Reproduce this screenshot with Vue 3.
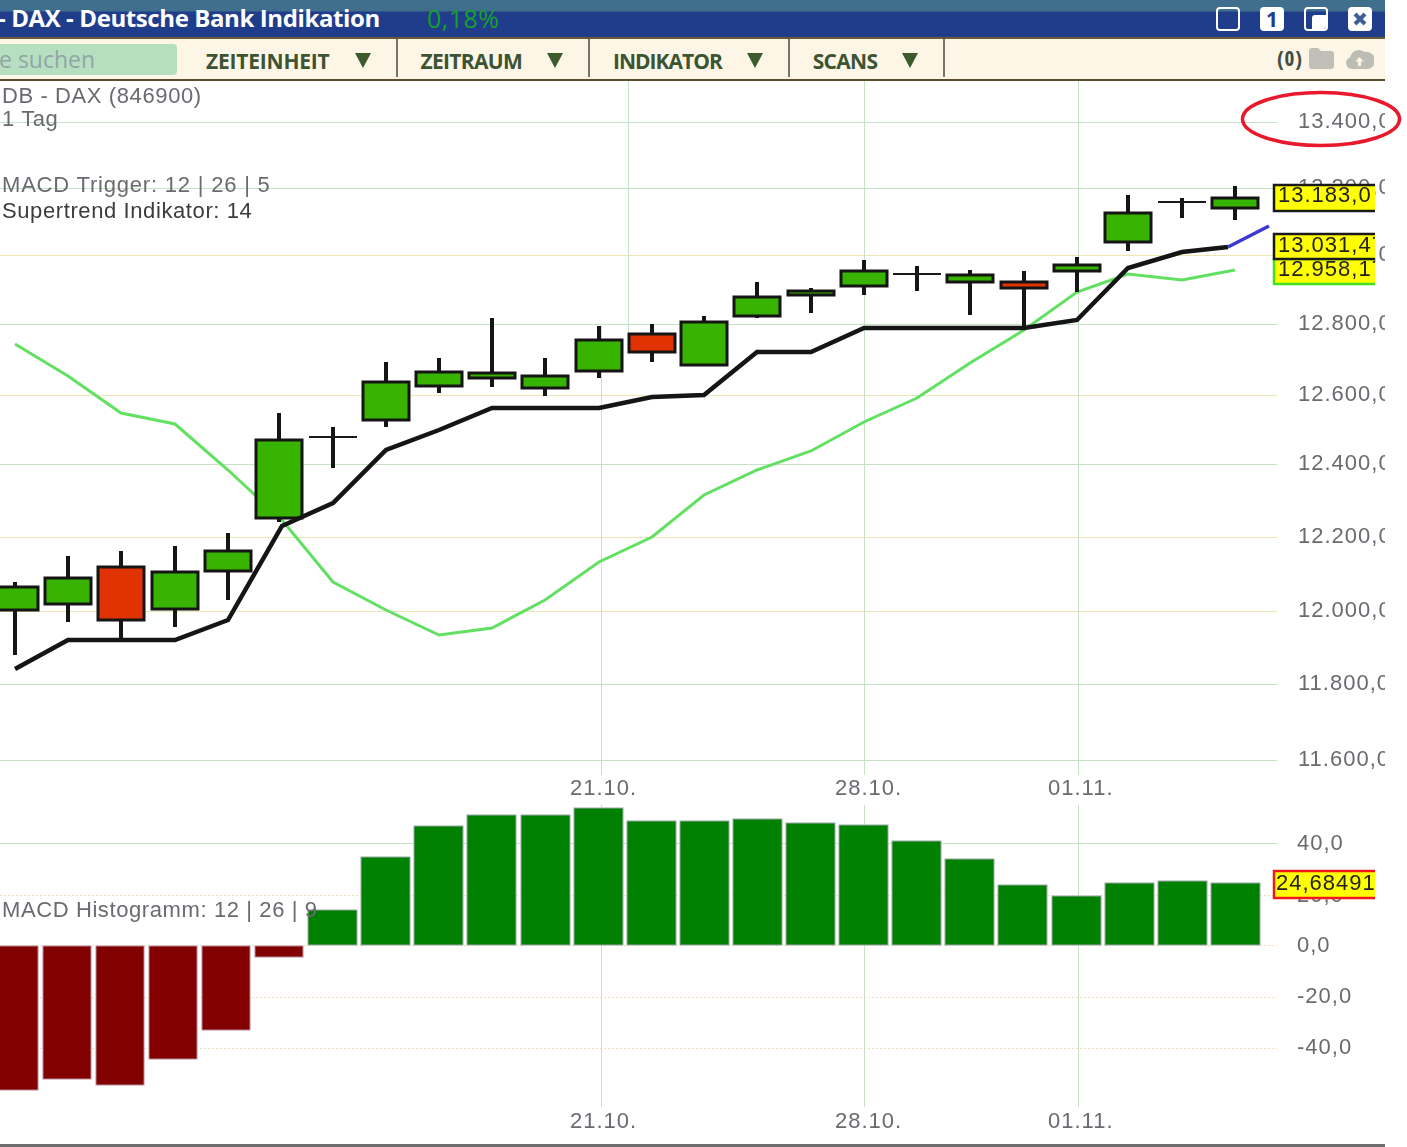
<script setup>
const menus = [
  { label: 'ZEITEINHEIT', tracking: -0.2 },
  { label: 'ZEITRAUM', tracking: -0.7 },
  { label: 'INDIKATOR', tracking: -1 },
  { label: 'SCANS', tracking: -0.7 }
]

const candles = [
  [15, 587, 610, 582, 655, 'g'], [68, 578, 604, 556, 622, 'g'], [121, 567, 620, 551, 640, 'r'],
  [175, 572, 609, 546, 627, 'g'], [228, 551, 571, 533, 600, 'g'], [279, 440, 518, 413, 522, 'g'],
  [333, 437, 437, 427, 468, 'd'], [386, 382, 420, 362, 427, 'g'], [439, 372, 386, 358, 393, 'g'],
  [492, 373, 378, 318, 387, 'g'], [545, 376, 388, 358, 396, 'g'], [599, 340, 371, 326, 378, 'g'],
  [652, 334, 352, 324, 362, 'r'], [704, 322, 365, 316, 366, 'g'], [757, 297, 316, 282, 318, 'g'],
  [811, 291, 295, 288, 313, 'g'], [864, 271, 286, 260, 295, 'g'], [917, 274, 274, 266, 291, 'd'],
  [970, 275, 282, 270, 315, 'g'], [1024, 282, 288, 271, 328, 'r'], [1077, 265, 271, 257, 292, 'g'],
  [1128, 213, 242, 195, 251, 'g'], [1182, 202, 202, 198, 218, 'd'], [1235, 198, 208, 186, 220, 'g']
].map(([x, top, bot, wt, wb, k]) => ({ x, top, bot, wt, wb, k }))

const trend = '15,669 68,640 175,640 228,620 282,526 333,503 386,450 439,430 492,408 599,408 652,397 704,395 757,352 811,352 864,328 1024,328 1077,320 1128,268 1182,252 1228,247'
const signal = '15,344 68,376 121,413 175,424 228,470 282,520 333,582 386,610 439,635 492,628 545,600 599,562 652,537 704,495 757,470 811,451 864,422 917,398 970,363 1024,330 1077,292 1128,274 1182,280 1235,270'

const redBars = [[-10, 1090], [43, 1079], [96, 1085], [149, 1059], [202, 1030], [255, 957]]
const greenBars = [[308, 910], [361, 857], [414, 826], [467, 815], [521, 815], [574, 808], [627, 821], [680, 821], [733, 819], [786, 823], [839, 825], [892, 841], [945, 859], [998, 885], [1052, 896], [1105, 883], [1158, 881], [1211, 883]]

const priceGrid = [
  { y: 122, c: 'green' }, { y: 188, c: 'green' }, { y: 255, c: 'yellow' }, { y: 324, c: 'green' },
  { y: 395, c: 'yellow' }, { y: 464, c: 'green' }, { y: 537, c: 'yellow' }, { y: 611, c: 'yellow' },
  { y: 684, c: 'green' }, { y: 760, c: 'green' }
]
const macdGrid = [
  { y: 843, c: 'green' }, { y: 895, c: 'dots' }, { y: 945, c: 'dots' }, { y: 997, c: 'dots' }, { y: 1048, c: 'dots' }
]
const priceLabels = [
  ['13.400,0', 128], ['13.200,0', 194], ['13.000,0', 261], ['12.800,0', 330], ['12.600,0', 401],
  ['12.400,0', 470], ['12.200,0', 543], ['12.000,0', 617], ['11.800,0', 690], ['11.600,0', 766]
]
const macdLabels = [['40,0', 850], ['20,0', 902], ['0,0', 952], ['-20,0', 1003], ['-40,0', 1054]]
const dates = [['21.10.', 570], ['28.10.', 835], ['01.11.', 1048]]
const verticals = [864, 1078]
</script>

<template>
  <div class="page">
    <header class="titlebar">
      <div class="title">- DAX - Deutsche Bank Indikation</div>
      <div class="change">0,18%</div>
      <div class="winbtns">
        <span class="winbtn"></span>
        <span class="winbtn solid">1</span>
        <span class="winbtn restore"><i></i></span>
        <span class="winbtn solid close">
          <svg viewBox="0 0 24 24" width="24" height="24"><path d="M7 7 17 17M17 7 7 17" /></svg>
        </span>
      </div>
    </header>

    <nav class="toolbar">
      <div class="search">e suchen</div>
      <div v-for="m in menus" :key="m.label" class="menu">
        <span class="menu-label" :style="{ letterSpacing: m.tracking + 'px' }">{{ m.label }}</span>
        <span class="arrow"></span>
      </div>
      <div class="tools">
        <span class="count">(0)</span>
        <svg class="folder" viewBox="0 0 26 22" width="26" height="22">
          <path d="M1 4q0-3 3-3h6l3 3h10q3 0 3 3v12q0 3-3 3H4q-3 0-3-3z" />
        </svg>
        <svg class="cloud" viewBox="0 0 29 23" width="29" height="23">
          <path d="M7 22a6 6 0 0 1-2-11.600A9.500 9.500 0 0 1 20 5a7 7 0 0 1 3 17z" />
          <path class="cloud-arrow" d="M14.500 10l-4 4.500h2.500V19h3v-4.500h2.500z" />
        </svg>
      </div>
    </nav>

    <svg class="chart" viewBox="0 81 1407 1063" width="1407" height="1063">
      <defs>
        <clipPath id="panel"><rect x="0" y="81" width="1385" height="1063" /></clipPath>
        <clipPath id="tagclip"><rect x="1272" y="170" width="103" height="740" /></clipPath>
      </defs>

      <g clip-path="url(#panel)">
        <line v-for="g in priceGrid" :key="g.y" class="grid" :class="g.c" x1="0" x2="1277" :y1="g.y" :y2="g.y" />
        <line v-for="g in macdGrid" :key="g.y" class="grid" :class="g.c" x1="0" x2="1277" :y1="g.y" :y2="g.y" />

        <line class="grid green" x1="628" x2="628" y1="81" y2="332" />
        <line class="grid green" x1="601" x2="601" y1="326" y2="775" />
        <line class="grid green" x1="601" x2="601" y1="805" y2="1107" />
        <template v-for="v in verticals" :key="v">
          <line class="grid green" :x1="v" :x2="v" y1="81" y2="775" />
          <line class="grid green" :x1="v" :x2="v" y1="805" y2="1107" />
        </template>

        <g class="labels">
          <text x="2" y="103">DB - DAX (846900)</text>
          <text x="2" y="126">1 Tag</text>
          <text class="trigger" x="2" y="192">MACD Trigger: 12 | 26 | 5</text>
          <text class="dark" x="2" y="218">Supertrend Indikator: 14</text>
          <text v-for="p in priceLabels" :key="p[0]" class="axis" x="1298" :y="p[1]">{{ p[0] }}</text>
          <text v-for="p in macdLabels" :key="p[0]" class="axis" x="1297" :y="p[1]">{{ p[0] }}</text>
          <template v-for="d in dates" :key="d[0]">
            <text class="date" :x="d[1]" y="795">{{ d[0] }}</text>
            <text class="date" :x="d[1]" y="1128">{{ d[0] }}</text>
          </template>
        </g>

        <polyline class="signal" :points="signal" />

        <g v-for="c in candles" :key="c.x">
          <line class="wick" :x1="c.x" :x2="c.x" :y1="c.wt" :y2="c.wb" />
          <line v-if="c.k === 'd'" class="doji" :x1="c.x - 24" :x2="c.x + 24" :y1="c.top" :y2="c.top" />
          <rect v-else class="body" :class="c.k" :x="c.x - 23" :y="c.top" width="46" :height="c.bot - c.top" />
        </g>

        <polyline class="trend" :points="trend" />
        <line class="trend-end" x1="1228" y1="247" x2="1269" y2="226" />

        <rect v-for="b in redBars" :key="b[0]" class="bar red" :x="b[0]" y="946" width="48" :height="b[1] - 946" />
        <rect v-for="b in greenBars" :key="b[0]" class="bar grn" :x="b[0]" :y="b[1]" width="49" :height="945 - b[1]" />

        <g class="labels">
          <text x="2" y="917">MACD Histogramm: 12 | 26 | 9</text>
        </g>
      </g>

      <g clip-path="url(#tagclip)">
        <rect class="tag tag-black" x="1274" y="185" width="110" height="26" />
        <rect class="tag tag-green" x="1274" y="259" width="110" height="25" />
        <rect class="tag tag-black" x="1274" y="234" width="110" height="25" />
        <rect class="tag tag-red" x="1274" y="871" width="110" height="27" />
        <g class="tag-text">
          <text x="1278" y="202">13.183,0</text>
          <text x="1278" y="252">13.031,47</text>
          <text x="1278" y="276">12.958,17</text>
          <text x="1276" y="890">24,68491</text>
        </g>
      </g>

      <ellipse class="circle" cx="1321" cy="119" rx="78.500" ry="26.500" />
    </svg>

    <div class="footer"></div>
  </div>
</template>

<style scoped>
.page {
  width: 1407px;
  height: 1147px;
  background: #fff;
  overflow: hidden;
  display: flex;
  flex-direction: column;
}
.titlebar {
  width: 1385px;
  height: 39px;
  box-sizing: border-box;
  display: flex;
  align-items: center;
  border-bottom: 2px solid #6a5a35;
  background: linear-gradient(#3f6f8c 0, #3f6f8c 11px, #1f3d8b 12px, #1f3d8b 100%);
}
.title {
  font-family: "Open Sans", sans-serif;
  font-weight: 700;
  font-size: 24px;
  letter-spacing: -0.4px;
  color: #fff;
  white-space: nowrap;
  margin-left: -2px;
  width: 429px;
  flex: none;
  position: relative;
  top: -1px;
}
.change {
  font-family: "Open Sans", sans-serif;
  font-size: 25px;
  letter-spacing: 0.5px;
  color: #16a02c;
  position: relative;
  top: -1px;
}
.winbtns {
  margin-left: auto;
  margin-right: 13px;
  display: flex;
  gap: 20px;
}
.winbtn {
  width: 24px;
  height: 24px;
  box-sizing: border-box;
  border: 2px solid #fff;
  border-radius: 4px;
  position: relative;
  overflow: hidden;
  display: flex;
  align-items: center;
  justify-content: center;
}
.winbtn.solid {
  background: #fff;
  color: #1f3d8b;
  font: 700 21px/20px "Open Sans", sans-serif;
}
.winbtn.restore i {
  position: absolute;
  right: 0;
  bottom: 0;
  width: 14px;
  height: 14px;
  background: #fff;
  border-radius: 3px 0 0 0;
}
.winbtn.close svg {
  position: absolute;
  left: -2px;
  top: -2px;
}
.winbtn.close path {
  stroke: #3f5f9b;
  stroke-width: 4;
  fill: none;
}
.toolbar {
  width: 1385px;
  height: 42px;
  box-sizing: border-box;
  display: flex;
  align-items: stretch;
  background: #fdf6e6;
  border-bottom: 2px solid #5c4e2c;
  padding-bottom: 2px;
}
.search {
  width: 177px;
  height: 31px;
  margin-top: 5px;
  margin-right: 6px;
  border-radius: 0 4px 4px 0;
  background: #b6dfc0;
  color: #93a5a8;
  font: 400 23px/31px "Open Sans", sans-serif;
  box-sizing: border-box;
  text-indent: -1px;
  white-space: nowrap;
}
.menu {
  display: flex;
  align-items: center;
  padding: 5px 25px 0 23px;
  border-right: 2px solid #77736a;
  color: #3c5432;
}
.menu-label {
  font-family: "Open Sans", sans-serif;
  font-weight: 700;
  font-size: 21px;
  white-space: nowrap;
}
.arrow {
  margin-left: 25px;
  width: 0;
  height: 0;
  border-left: 8px solid transparent;
  border-right: 8px solid transparent;
  border-top: 15px solid #3c5a2c;
}
.tools {
  margin-left: auto;
  margin-right: 11px;
  display: flex;
  align-items: center;
  gap: 5px;
}
.count {
  font-family: "Open Sans", sans-serif;
  font-weight: 700;
  font-size: 21px;
  font-stretch: 75%;
  letter-spacing: 1px;
  color: #3f4f45;
}
.folder path { fill: #c0c0b8; }
.cloud { margin-left: 6px; }
.cloud path { fill: #bdbdb5; }
.cloud .cloud-arrow { fill: #fdf6e6; }
.chart {
  display: block;
  flex: none;
}
.grid {
  stroke-width: 1;
  shape-rendering: crispEdges;
}
.grid.green { stroke: #c8e2c8; }
.grid.yellow { stroke: #ece6b4; }
.grid.dots {
  stroke: #f3dfb8;
  stroke-dasharray: 2 2;
}
.labels text {
  font: 400 22px "Liberation Sans", sans-serif;
  letter-spacing: 0.6px;
  fill: #6a6a70;
  filter: blur(0.4px);
}
.labels .dark { fill: #3c3c40; }
.labels .trigger { letter-spacing: 0.8px; }
.labels .date { letter-spacing: 1px; }
.labels .axis { letter-spacing: 1px; }
.signal {
  fill: none;
  stroke: #62e062;
  stroke-width: 3;
}
.trend {
  fill: none;
  stroke: #151515;
  stroke-width: 4.500;
}
.trend-end {
  stroke: #3a3ad0;
  stroke-width: 3.500;
}
.wick {
  stroke: #151515;
  stroke-width: 4;
}
.doji {
  stroke: #1a1a1a;
  stroke-width: 2;
}
.body {
  stroke: #151515;
  stroke-width: 3;
}
.body.g { fill: #38b400; }
.body.r { fill: #e13203; }
.bar {
  stroke: #9aa7a7;
  stroke-width: 1;
}
.bar.grn { fill: #008000; }
.bar.red { fill: #820000; stroke: #b58a9a; }
.tag {
  fill: #ffff00;
  stroke-width: 2.500;
}
.tag-black { stroke: #1a1a1a; }
.tag-green { stroke: #44e020; }
.tag-red { stroke: #f01818; }
.tag-text text {
  font: 400 22px "Liberation Sans", sans-serif;
  letter-spacing: 1px;
  fill: #222;
  filter: blur(0.3px);
}
.circle {
  fill: none;
  stroke: #e8192c;
  stroke-width: 3.500;
}
.footer {
  width: 1385px;
  height: 3px;
  background: #6e6e6e;
}
</style>
